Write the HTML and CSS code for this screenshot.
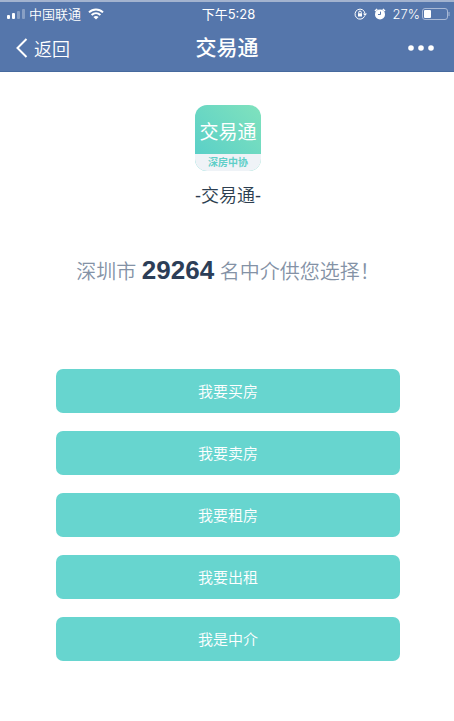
FILE: index.html
```html
<!DOCTYPE html>
<html lang="zh-CN">
<head>
  <meta charset="utf-8">
  <meta name="viewport" content="width=device-width, initial-scale=1">
  <title>交易通</title>
  <link rel="stylesheet" href="styles.css">
</head>
<body>
  <header class="header">
    <div class="status">
      <div class="status-left">
        <svg class="signal" width="18" height="10" viewBox="0 0 18 10" fill="#fff">
          <rect x="0" y="6" width="3" height="4" rx="1"/>
          <rect x="5" y="4" width="3" height="6" rx="1"/>
          <rect x="10" y="2" width="3" height="8" rx="1" opacity=".3"/>
          <rect x="15" y="0" width="3" height="10" rx="1" opacity=".3"/>
        </svg>
        <span>中国联通</span>
        <svg class="wifi" width="16" height="12" viewBox="0 0 16 12" fill="none" stroke="#fff" stroke-width="2">
          <path d="M1 4.4C5 .4 11 .4 15 4.4"/>
          <path d="M3.6 7C6.2 4.6 9.8 4.6 12.4 7"/>
          <path d="M8 11.5L5.4 8.9C7 7.6 9 7.6 10.6 8.9Z" fill="#fff" stroke="none"/>
        </svg>
      </div>
      <span class="time">下午5:28</span>
      <div class="status-right">
        <svg width="13" height="12" viewBox="0 0 13 12" fill="none" stroke="#fff">
          <path d="M10.6 8.2A5 5 0 1 1 11 5.5"/>
          <path d="M9 5.4H13L11 8Z" fill="#fff" stroke="none"/>
          <rect x="4" y="5.3" width="4" height="3.2" fill="#fff" stroke="none"/>
          <path d="M4.7 5.5V4.4A1.3 1.3 0 0 1 7.3 4.4V5.5"/>
        </svg>
        <svg class="alarm" width="12" height="12" viewBox="0 0 12 12">
          <circle cx="6" cy="6.4" r="5" fill="#fff"/>
          <path d="M1 3L3.2 1M11 3L8.8 1" stroke="#fff" stroke-width="1.6"/>
          <path d="M6.5 3.6V6.5H4" fill="none" stroke="#5576ab"/>
        </svg>
        <span>27%</span>
        <svg class="battery" width="28" height="12" viewBox="0 0 28 12">
          <rect x=".5" y=".5" width="25" height="11" rx="2.5" fill="none" stroke="#a9b9d5"/>
          <rect x="2" y="2" width="7" height="8" rx="1" fill="#fff"/>
          <path d="M27 4V8" stroke="#a9b9d5"/>
        </svg>
      </div>
    </div>
    <nav class="nav">
      <a class="back" href="#">
        <svg width="12" height="20" viewBox="0 0 12 20" fill="none" stroke="#fff" stroke-width="2">
          <path d="M10.5 1L1.5 10L10.5 19"/>
        </svg>
        返回
      </a>
      <h1 class="title">交易通</h1>
      <button class="more" type="button" aria-label="更多">
        <svg width="26" height="6" viewBox="0 0 26 6" fill="#fff">
          <circle cx="3" cy="3" r="2.8"/>
          <circle cx="13" cy="3" r="2.8"/>
          <circle cx="23" cy="3" r="2.8"/>
        </svg>
      </button>
    </nav>
  </header>

  <main class="main">
    <div class="logo">
      <div class="logo-name">交易通</div>
      <div class="logo-org">深房中协</div>
    </div>
    <h2 class="app-name">-交易通-</h2>
    <p class="count">深圳市 <strong>29264</strong> 名中介供您选择！</p>
    <div class="actions">
      <button class="btn" type="button">我要买房</button>
      <button class="btn" type="button">我要卖房</button>
      <button class="btn" type="button">我要租房</button>
      <button class="btn" type="button">我要出租</button>
      <button class="btn" type="button">我是中介</button>
    </div>
  </main>
</body>
</html>
```

FILE: styles.css
```css
* {
  box-sizing: border-box;
}

body {
  margin: 0;
  background: #fff;
  font-family: "Liberation Sans", "Noto Sans CJK SC", sans-serif;
}

svg {
  display: block;
  flex: none;
}

.header {
  background: #5576ab;
  border-top: 2px solid #a3b3cf;
  border-bottom: 1px solid #476a9e;
  color: #fff;
}

.status,
.nav {
  display: grid;
  grid-template-columns: 1fr auto 1fr;
  align-items: center;
}

.status {
  height: 23px;
  padding: 0 4px 0 7px;
  font-family: Inter, "Noto Sans CJK SC", sans-serif;
  font-size: 13px;
  font-weight: 350;
  line-height: 20px;
}

.status-left,
.status-right {
  display: flex;
  align-items: center;
}

.signal {
  margin-right: 4px;
}

.wifi {
  margin-left: 7px;
}

.time {
  font-weight: 400;
}

.status-right {
  justify-content: flex-end;
}

.alarm {
  margin: 0 7px;
}

.battery {
  margin-left: 2px;
}

.nav {
  height: 46px;
  padding: 0 16px;
}

.back {
  display: flex;
  align-items: center;
  gap: 6px;
  color: #fff;
  font-size: 18px;
  font-weight: 350;
  text-decoration: none;
}

.title {
  margin: 0;
  font-size: 21px;
  font-weight: 500;
  line-height: 30px;
}

.more {
  justify-self: end;
  padding: 8px 4px;
  border: 0;
  background: none;
}

.main {
  display: flex;
  flex-direction: column;
  align-items: center;
  padding: 33px 54px 60px 56px;
}

.logo {
  width: 66px;
  border-radius: 12px;
  overflow: hidden;
  text-align: center;
  color: #fff;
  background: linear-gradient(45deg, #55cdc9, #80e2bd);
}

.logo-name {
  padding-top: 6px;
  font-size: 19px;
  font-weight: 400;
  line-height: 43px;
}

.logo-org {
  background: #eff3f7;
  color: #5fcfc8;
  font-size: 10px;
  font-weight: 700;
  line-height: 17px;
}

.app-name {
  margin: 11px 0 0;
  color: #2c3e50;
  font-size: 18px;
  font-weight: 350;
  line-height: 28px;
}

.count {
  margin: 40px 0 0;
  color: #8492a6;
  font-size: 20px;
  font-weight: 350;
  line-height: 40px;
  white-space: nowrap;
}

.count strong {
  color: #2c3e57;
  font-size: 26px;
  font-weight: 700;
}

.actions {
  display: flex;
  flex-direction: column;
  gap: 18px;
  width: 100%;
  margin-top: 77px;
}

.btn {
  height: 44px;
  padding: 0 0 2px;
  border: 0;
  border-radius: 7px;
  background: #67d5cf;
  color: #fff;
  font-family: inherit;
  font-size: 15px;
  font-weight: 350;
}
```
